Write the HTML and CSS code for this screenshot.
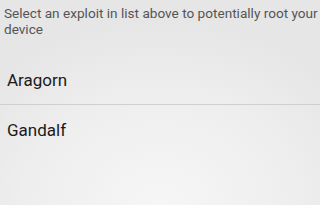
FILE: index.html
```html
<!DOCTYPE html>
<html>
<head>
<meta charset="utf-8">
<link rel="stylesheet" href="styles.css">
</head>
<body>
<div class="screen">
  <p class="hint">Select an exploit in list above to potentially root your device</p>
  <ul class="list">
    <li class="item">Aragorn</li>
    <li class="item">Gandalf</li>
  </ul>
</div>
</body>
</html>
```
FILE: styles.css
```css
html, body {
  margin: 0;
  padding: 0;
  width: 320px;
  height: 205px;
  overflow: hidden;
}
.screen {
  width: 320px;
  height: 205px;
  background: radial-gradient(ellipse 70% 90% at 50% 100%, #f6f6f6 0%, #eeeeee 60%, #e6e6e6 100%);
  font-family: Roboto, "Noto Sans", sans-serif;
  display: flex;
  flex-direction: column;
}
.hint {
  margin: 0;
  padding: 5px 0 0 4px;
  font-size: 13.6px;
  line-height: 16px;
  color: #555555;
  height: 55px;
  box-sizing: border-box;
}
.list {
  list-style: none;
  margin: 0;
  padding: 0;
}
.item {
  height: 49px;
  display: flex;
  align-items: center;
  padding-left: 7px;
  font-size: 17px;
  color: #1a1a1a;
}
.item + .item {
  border-top: 1px solid #cfcfcf;
}
```
